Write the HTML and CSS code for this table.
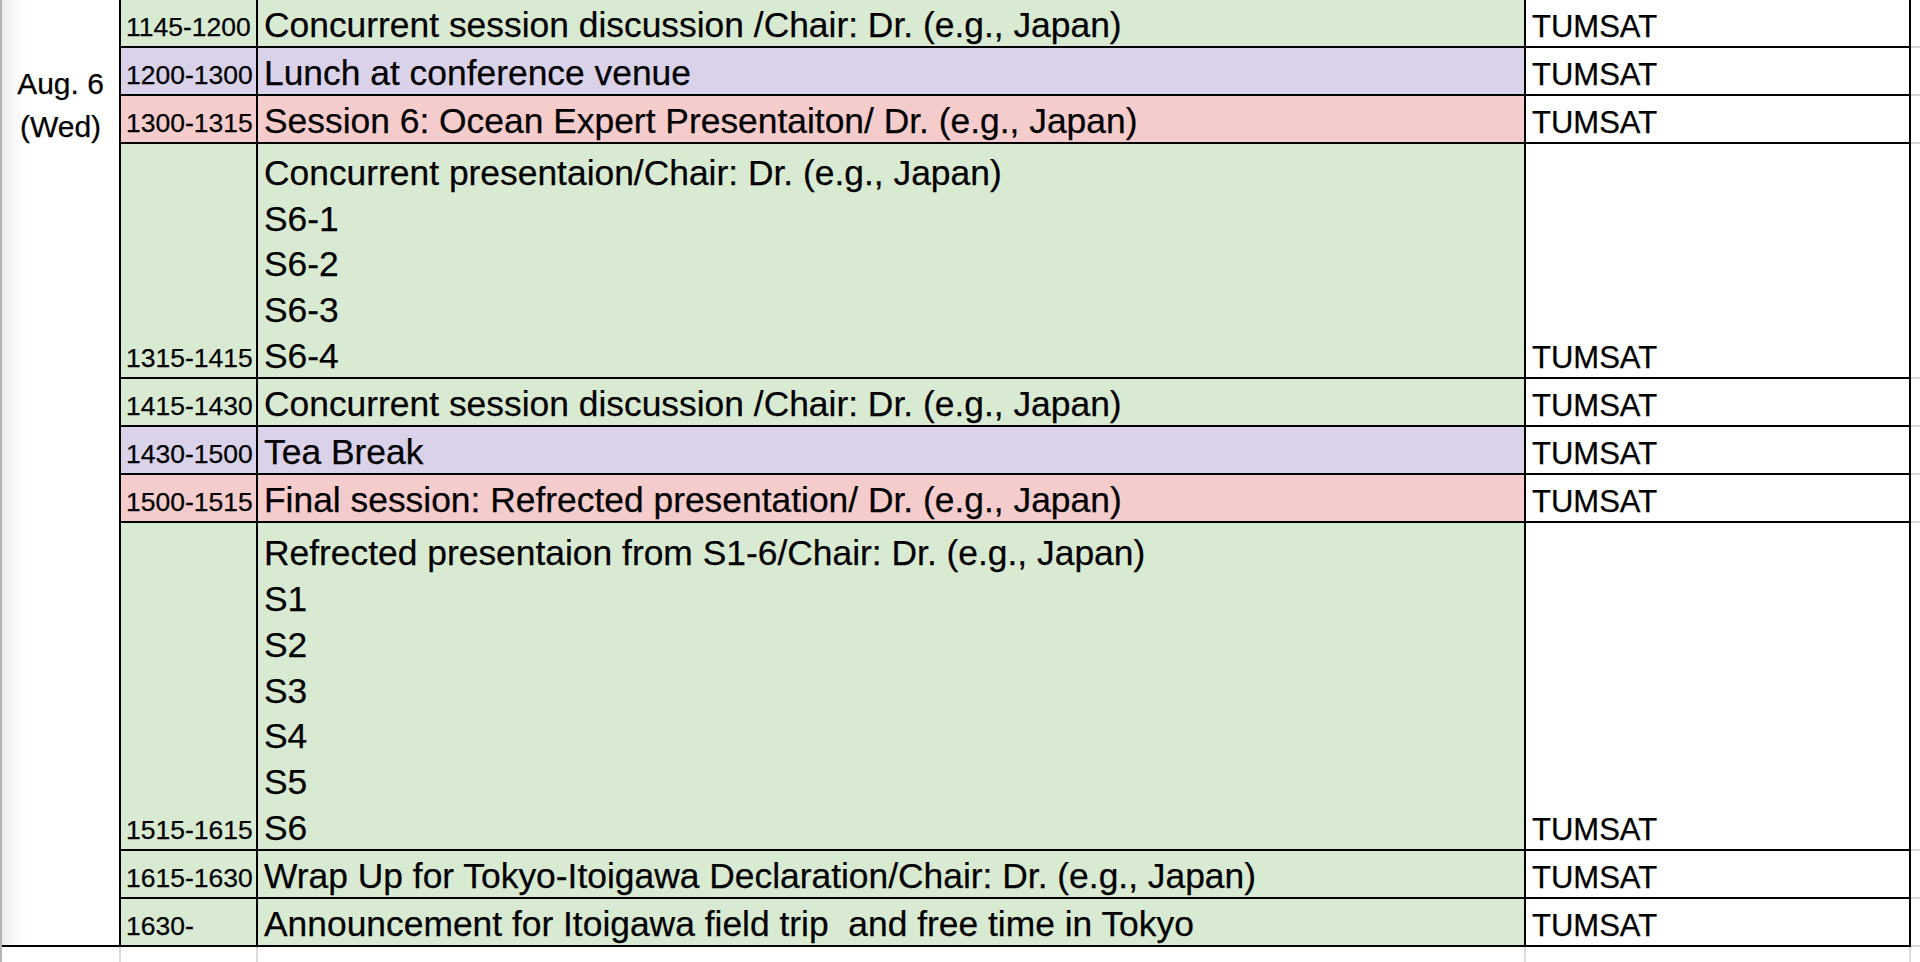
FILE: index.html
```html
<!DOCTYPE html>
<html lang="en">
<head>
<meta charset="utf-8">
<title>Schedule</title>
<link rel="stylesheet" href="styles.css">
</head>
<body>
<div class="sheet">
  <div class="grid">
    <div class="date"><div>Aug. 6</div><div>(Wed)</div></div>

    <div class="c time green">1145-1200</div>
    <div class="c main green"><div>Concurrent session discussion /Chair: Dr. (e.g., Japan)</div></div>
    <div class="c loc">TUMSAT</div>

    <div class="c time purple">1200-1300</div>
    <div class="c main purple"><div>Lunch at conference venue</div></div>
    <div class="c loc">TUMSAT</div>

    <div class="c time pink">1300-1315</div>
    <div class="c main pink"><div>Session 6: Ocean Expert Presentaiton/ Dr. (e.g., Japan)</div></div>
    <div class="c loc">TUMSAT</div>

    <div class="c time green">1315-1415</div>
    <div class="c main green">
      <div>Concurrent presentaion/Chair: Dr. (e.g., Japan)</div>
      <div>S6-1</div>
      <div>S6-2</div>
      <div>S6-3</div>
      <div>S6-4</div>
    </div>
    <div class="c loc">TUMSAT</div>

    <div class="c time green">1415-1430</div>
    <div class="c main green"><div>Concurrent session discussion /Chair: Dr. (e.g., Japan)</div></div>
    <div class="c loc">TUMSAT</div>

    <div class="c time purple">1430-1500</div>
    <div class="c main purple"><div>Tea Break</div></div>
    <div class="c loc">TUMSAT</div>

    <div class="c time pink">1500-1515</div>
    <div class="c main pink"><div>Final session: Refrected presentation/ Dr. (e.g., Japan)</div></div>
    <div class="c loc">TUMSAT</div>

    <div class="c time green">1515-1615</div>
    <div class="c main green">
      <div>Refrected presentaion from S1-6/Chair: Dr. (e.g., Japan)</div>
      <div>S1</div>
      <div>S2</div>
      <div>S3</div>
      <div>S4</div>
      <div>S5</div>
      <div>S6</div>
    </div>
    <div class="c loc">TUMSAT</div>

    <div class="c time green">1615-1630</div>
    <div class="c main green"><div>Wrap Up for Tokyo-Itoigawa Declaration/Chair: Dr. (e.g., Japan)</div></div>
    <div class="c loc">TUMSAT</div>

    <div class="c time green">1630-</div>
    <div class="c main green"><div class="pre">Announcement for Itoigawa field trip  and free time in Tokyo</div></div>
    <div class="c loc">TUMSAT</div>
  </div>
  <div class="rstrip">
    <div></div><div></div><div></div><div></div><div></div>
    <div></div><div></div><div></div><div></div><div></div>
  </div>
</div>
<div class="bstrip">
  <div></div><div></div><div></div><div></div><div></div>
</div>
</body>
</html>
```
FILE: styles.css
```css
html, body {
  margin: 0;
  padding: 0;
  background: #ffffff;
}

body {
  font-family: "Liberation Sans", Arial, sans-serif;
  color: #000000;
  width: 1920px;
  height: 962px;
  overflow: hidden;
  -webkit-text-stroke: 0.25px #000000;
}

.sheet {
  display: flex;
  align-items: flex-start;
}

.grid {
  display: grid;
  grid-template-columns: 117px 135px 1266px 383px;
  grid-template-rows: 46px 46px 46px 233px 46px 46px 46px 326px 46px 46px;
  gap: 2px;
  background: #000000;
  padding: 0 2px 2px 0;
  border-left: 2px solid #b3b3b3;
}

.date {
  grid-column: 1;
  grid-row: 1 / span 10;
  background: linear-gradient(to right, #ececec 0, #f7f7f7 10px, #ffffff 26px);
  text-align: center;
  font-size: 30px;
  line-height: 43px;
  padding-top: 62px;
}

.c {
  display: flex;
  flex-direction: column;
  justify-content: flex-end;
  gap: 5.8px;
  white-space: nowrap;
}

.time {
  font-size: 26.5px;
  line-height: 30px;
  padding: 0 2px 4px 5px;
}

.main {
  font-size: 35.4px;
  line-height: 40px;
  padding: 0 6px 1px;
}

.loc {
  font-size: 31px;
  line-height: 35.5px;
  padding: 0 6px 1.5px;
  background: #ffffff;
}

.pre {
  white-space: pre;
}

.green { background: #d9ead3; }
.purple { background: #d9d2e9; }
.pink { background: #f4cccc; }

.rstrip {
  width: 9px;
  display: grid;
  grid-template-rows: 46px 46px 46px 233px 46px 46px 46px 326px 46px 46px;
  gap: 2px;
  padding-bottom: 2px;
  background: #d6d6d6;
}

.rstrip div {
  background: #ffffff;
}

.bstrip {
  display: grid;
  grid-template-columns: 117px 135px 1266px 383px 9px;
  column-gap: 2px;
  height: 15px;
  background: #dcdcdc;
  border-left: 2px solid #b3b3b3;
  width: max-content;
}

.bstrip div {
  background: #ffffff;
}
```
